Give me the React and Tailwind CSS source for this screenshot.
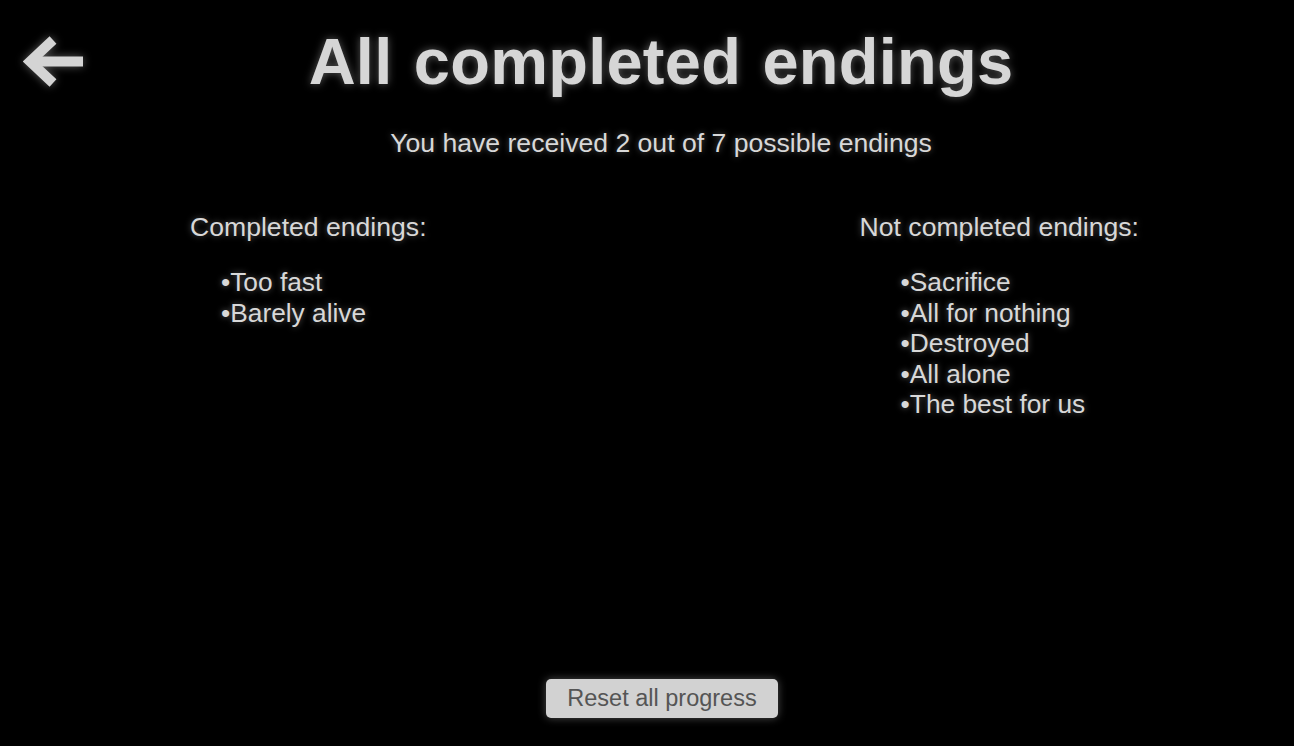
import React from 'react'

const glow = '[text-shadow:0_0_6px_rgba(255,255,255,0.35)]'

function BackArrow() {
  return (
    <svg width="62" height="54" viewBox="0 0 62 54" className="drop-shadow-[0_0_4px_rgba(255,255,255,0.35)]">
      <path d="M60 25.5 H14" stroke="#d4d4d4" strokeWidth="10" fill="none" />
      <path d="M30 4 L7 25.5 L30 47" stroke="#d4d4d4" strokeWidth="10" fill="none" strokeLinejoin="miter" />
    </svg>
  )
}

function EndingList({ title, items, indent }) {
  return (
    <div className="flex flex-col">
      <h2 className={`text-[26.6px] leading-[30px] text-[#d8d8d8] ${glow}`}>{title}</h2>
      <ul className={`mt-[25px] flex flex-col ${indent}`}>
        {items.map((item) => (
          <li key={item} className={`text-[26.3px] leading-[30.5px] text-[#d8d8d8] ${glow}`}>
            •{item}
          </li>
        ))}
      </ul>
    </div>
  )
}

export default function App() {
  const completed = ['Too fast', 'Barely alive']
  const notCompleted = ['Sacrifice', 'All for nothing', 'Destroyed', 'All alone', 'The best for us']

  return (
    <div className="relative w-full h-[746px] bg-black overflow-hidden font-['Liberation_Sans',Arial,sans-serif]">
      {/* Back button */}
      <button className="absolute left-[23px] top-[36px]">
        <BackArrow />
      </button>

      <div className="flex flex-col h-full">
        {/* Title */}
        <div className="flex flex-col items-center pl-[28px] pt-[24px]">
          <h1 className="text-[65px] leading-[76px] font-bold tracking-[0.25px] [word-spacing:3px] text-[#d6d6d6] [text-shadow:0_0_8px_rgba(255,255,255,0.35)]">
            All completed endings
          </h1>
          <p className={`mt-[28px] text-[26.6px] leading-[30px] text-[#d8d8d8] ${glow}`}>
            You have received 2 out of 7 possible endings
          </p>
        </div>

        {/* Columns */}
        <div className="flex justify-between pl-[190px] pr-[155px] mt-[54px]">
          <EndingList title="Completed endings:" items={completed} indent="pl-[31px]" />
          <div className="-ml-[2px]">
            <EndingList title="Not completed endings:" items={notCompleted} indent="pl-[41px]" />
          </div>
        </div>

        {/* Reset */}
        <div className="mt-auto flex justify-center pl-[30px] pb-[28px]">
          <button className="w-[232px] h-[39px] rounded-[5px] bg-[#d2d2d2] text-[23.5px] text-[#555555] shadow-[0_0_8px_rgba(255,255,255,0.3)]">
            Reset all progress
          </button>
        </div>
      </div>
    </div>
  )
}
